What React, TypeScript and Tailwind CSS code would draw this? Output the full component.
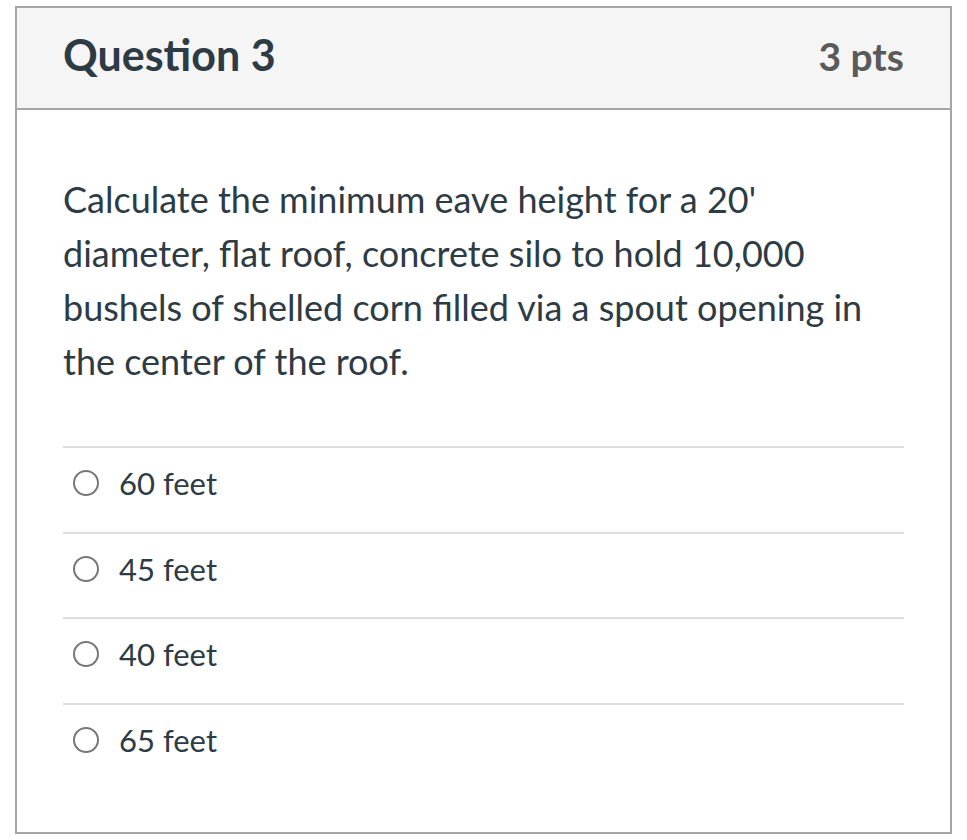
import React from "react";

const answers = ["60 feet", "45 feet", "40 feet", "65 feet"];

export default function App() {
  return (
    <div className="w-[967px] h-[840px] bg-white pt-[6px] pl-[15px]" style={{ fontFamily: "Lato, 'Open Sans', sans-serif" }}>
      <div className="w-[937px] h-[828px] border-2 border-[#a6a6a6] flex flex-col">
        <div className="h-[102px] bg-[#f5f5f5] border-b-2 border-[#a6a6a6] flex items-baseline justify-between px-[46px] pt-[21px]">
          <span className="text-[43px] font-bold text-[#2d3b45] leading-[1.2]">Question 3</span>
          <span className="text-[39px] font-bold text-[#5a5a5a] leading-[1.2]">3 pts</span>
        </div>
        <div className="px-[46px] pt-[62px]">
          <p className="text-[36px] leading-[54px] text-[#2d3b45]">
            Calculate the minimum eave height for a 20' diameter, flat roof, concrete silo to hold 10,000 bushels of shelled corn filled via a spout opening in the center of the roof.
          </p>
          <div className="mt-[58px]">
            {answers.map((a) => (
              <div key={a} className="h-[85.5px] border-t-2 border-[#dedede] flex items-start pt-[11px]">
                <div className="flex items-center h-[48px]">
                  <span className="ml-[10px] w-[26px] h-[26px] rounded-full border-2 border-[#777777] bg-white" />
                  <span className="ml-[20px] text-[31px] leading-[48px] text-[#2d3b45]">{a}</span>
                </div>
              </div>
            ))}
          </div>
        </div>
      </div>
    </div>
  );
}
